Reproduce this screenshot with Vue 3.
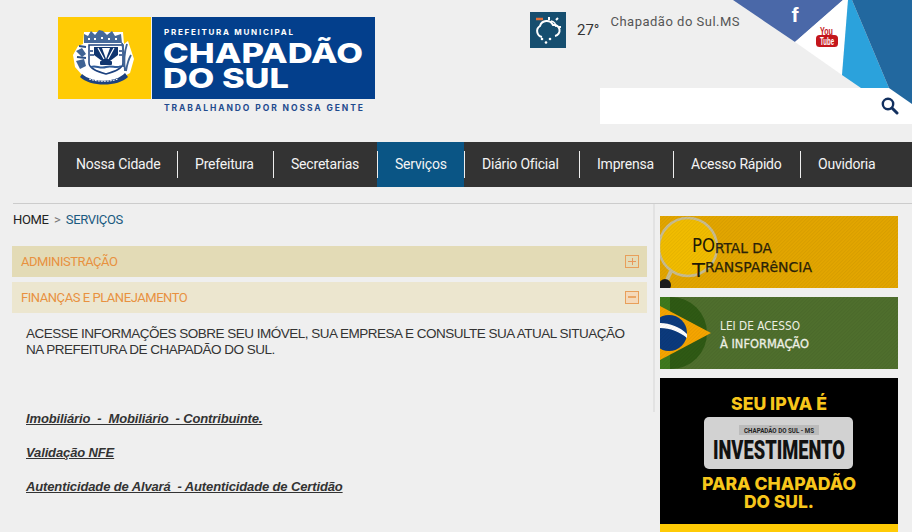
<template>
  <div class="page">
    <header class="header">
      <a class="logo">
        <svg width="317" height="100" viewBox="0 0 317 100">
          <rect width="93" height="82" fill="#ffcb05" />
          <rect x="94" width="223" height="82" fill="#033f8c" />
          <!-- brasao -->
          <path d="M25 27 L26 15 L65 15 L66 27 L70 24 L76 42 L72 56 L65 60 L58 65 L34 65 L24 58 L17 50 L15 38 L20 29 Z" fill="#fff" />
          <path d="M26 26 L26 17 L30 19 L33 14 L37 18 L41 13 L45 14 L49 18 L54 14 L57 19 L63 17 L64 26 Z" fill="#46699a" />
          <path d="M30 22 h2 M36 22 h2 M43 21 h2 M50 22 h2 M57 22 h2" stroke="#fff" stroke-width="2" />
          <path d="M31 28 H65 V46 C65 52 55 55 48 57 C41 55 31 52 31 46 Z" fill="#fff" stroke="#1d427f" stroke-width="1.500" />
          <path d="M36 30 H60 V38 L48 47 L36 38 Z" fill="#10356f" />
          <path d="M44 31 L48 42 L52 31 Z" fill="#fff" />
          <path d="M40 31 L46 42 M56 31 L50 42" stroke="#fff" stroke-width="1.200" />
          <path d="M32 34 h3 M32 38 h4 M61 34 h3 M61 38 h3" stroke="#1d427f" stroke-width="1.400" />
          <rect x="42" y="44" width="12" height="4" rx="1" fill="#10356f" />
          <path d="M33 50 C38 48 42 52 48 50 C54 48 58 52 63 49" fill="none" stroke="#2e5a97" stroke-width="2" />
          <path d="M18 34 l6 -3 l4 6 l-4 3 z M18 44 l8 -2 l2 7 l-6 3 z" fill="#3f6394" />
          <path d="M21 29 l7 1 M19 40 l9 1" stroke="#2a4f86" stroke-width="2" />
          <path d="M69 27 C66 36 66 46 67 54 M73 38 C70 43 69 48 68 54 M64 26 C66 34 66 42 65 50" fill="none" stroke="#3f6394" stroke-width="1.800" />
          <path d="M24 57 C34 66 58 66 67 56 L70 60 C60 70 32 70 22 60 Z" fill="#1d427f" />
          <path d="M31 62 C40 65 52 65 60 62" fill="none" stroke="#fff" stroke-width="1" stroke-dasharray="2 1" />
          <text x="106" y="17.500" class="logo-top" textLength="129" lengthAdjust="spacing">PREFEITURA MUNICIPAL</text>
          <text x="105" y="46" class="logo-big" textLength="200" lengthAdjust="spacingAndGlyphs">CHAPADÃO</text>
          <text x="105" y="70.500" class="logo-big" textLength="126" lengthAdjust="spacingAndGlyphs">DO SUL</text>
          <text x="106" y="94" class="logo-tag" textLength="199" lengthAdjust="spacing">TRABALHANDO POR NOSSA GENTE</text>
        </svg>
      </a>
      <div class="top-right">
        <div class="weather">
          <div class="weather-icon">
            <svg width="36" height="36" viewBox="0 0 36 36">
              <path d="M6 7 h7" stroke="#e2703a" stroke-width="2.500" />
              <path d="M19 5 v3 M26 8 l2 -2 M28 15 h3" stroke="#fff" stroke-width="2" fill="none" />
              <path d="M21 9 a6 6 0 0 1 5 6" stroke="#fff" stroke-width="1.500" fill="none" />
              <path d="M12 25 a6 6 0 0 1 -2 -11 a7 7 0 0 1 13 -1 a5.500 5.500 0 0 1 2 11" stroke="#fff" stroke-width="2" fill="none" />
              <circle cx="12" cy="27" r="1.300" fill="#fff" />
              <circle cx="20" cy="27" r="1.300" fill="#fff" />
              <circle cx="16" cy="30.500" r="1.300" fill="#fff" />
            </svg>
          </div>
          <span class="temp">27°</span>
          <span class="city">Chapadão do Sul.MS</span>
        </div>
        <div class="search">
          <svg width="18" height="18" viewBox="0 0 18 18">
            <circle cx="7" cy="7" r="5.200" fill="none" stroke="#12305f" stroke-width="2.400" />
            <path d="M11 11 L16 16" stroke="#12305f" stroke-width="3" stroke-linecap="round" />
          </svg>
        </div>
      </div>
      <svg class="social" width="180" height="105" viewBox="0 0 180 105">
        <polygon points="1,0 63,42 111,0" fill="#4a68a8" />
        <polygon points="111,0 63,42 110,75 116,0" fill="#fff" />
        <polygon points="116,0 110,75 129,88 157,88 120,0" fill="#2ba2dc" />
        <polygon points="120,0 157,88 180,104 180,0" fill="#22689f" />
        <text x="63" y="22" class="fb">f</text>
        <text x="94.500" y="35" class="yt-top" textLength="13" lengthAdjust="spacingAndGlyphs">You</text>
        <rect x="84" y="35" width="22" height="12" rx="3.500" fill="#c4161c" />
        <text x="95" y="45" class="yt-tube" textLength="14" lengthAdjust="spacingAndGlyphs">Tube</text>
      </svg>
    </header>

    <nav class="menu">
      <a v-for="item in menu" :key="item" class="menu-item" :class="{ active: item === 'Serviços' }">{{ item }}</a>
    </nav>

    <main class="main">
      <section class="content">
        <div class="breadcrumb">HOME <span class="gt">&gt;</span> <span class="current">SERVIÇOS</span></div>
        <div class="acc acc-closed">
          <span>ADMINISTRAÇÃO</span>
          <span class="acc-icon"><i class="h"></i><i class="v"></i></span>
        </div>
        <div class="acc acc-open">
          <span>FINANÇAS E PLANEJAMENTO</span>
          <span class="acc-icon filled"><i class="h thick"></i></span>
        </div>
        <div class="acc-body">
          <p class="intro">ACESSE INFORMAÇÕES SOBRE SEU IMÓVEL, SUA EMPRESA E CONSULTE SUA ATUAL SITUAÇÃO<br />NA PREFEITURA DE CHAPADÃO DO SUL.</p>
          <p v-for="link in links" :key="link" class="link"><a>{{ link }}</a></p>
        </div>
      </section>

      <aside class="side">
        <svg class="banner" width="238" height="72" viewBox="0 0 238 72">
          <defs>
            <pattern id="stripes" width="2.500" height="2.500" patternUnits="userSpaceOnUse" patternTransform="rotate(45)">
              <rect width="1" height="2.500" fill="#000" opacity="0.05" />
            </pattern>
          </defs>
          <rect width="238" height="72" fill="#e3a600" />
          <circle cx="28" cy="31" r="29" fill="#f2bd00" stroke="#c9bd91" stroke-width="2.500" />
          <path d="M11 55 L7 64" stroke="#c9bd91" stroke-width="4" />
          <circle cx="5" cy="69" r="6" fill="#1d1d1d" />
          <rect width="238" height="72" fill="url(#stripes)" />
          <text x="32" y="36" class="b-po" textLength="23" lengthAdjust="spacingAndGlyphs">PO</text>
          <text x="55" y="37" class="b-rest" textLength="57" lengthAdjust="spacingAndGlyphs">RTAL DA</text>
          <text x="32" y="61" class="b-po" textLength="13" lengthAdjust="spacingAndGlyphs">T</text>
          <text x="45" y="56" class="b-rest" textLength="107" lengthAdjust="spacingAndGlyphs">RANSPARêNCIA</text>
        </svg>
        <svg class="banner" width="238" height="72" viewBox="0 0 238 72">
          <rect width="238" height="72" fill="#4f6f2d" />
          <circle cx="11" cy="36" r="36" fill="#2f5a14" />
          <rect width="10" height="72" fill="#3e7a1d" />
          <polygon points="0,9 51,36 0,63" fill="#f6a500" />
          <circle cx="9" cy="36" r="18" fill="#0b3a7d" />
          <path d="M0 26 C10 26 20 30 27 37 L27 41 C20 35 10 31 0 31 Z" fill="#fff" />
          <rect width="238" height="72" fill="url(#stripes)" />
          <text x="60" y="33" class="b-lei" textLength="80" lengthAdjust="spacingAndGlyphs">LEI DE ACESSO</text>
          <text x="60" y="51" class="b-lei heavier" textLength="89" lengthAdjust="spacingAndGlyphs">À INFORMAÇÃO</text>
        </svg>
        <svg class="banner" width="238" height="154" viewBox="0 0 238 154">
          <rect width="238" height="154" fill="#000" />
          <rect y="146" width="238" height="8" fill="#ffcb05" />
          <text x="119" y="32" class="b-ipva" textLength="96" lengthAdjust="spacingAndGlyphs">SEU IPVA É</text>
          <rect x="44" y="39" width="149" height="52" rx="5" fill="#d2d2d2" />
          <rect x="79" y="47" width="80" height="10" fill="#bbb" />
          <text x="119" y="55" class="b-plate-top" textLength="70" lengthAdjust="spacingAndGlyphs">CHAPADÃO DO SUL - MS</text>
          <text x="119" y="81" class="b-plate" textLength="132" lengthAdjust="spacingAndGlyphs">INVESTIMENTO</text>
          <text x="119" y="112" class="b-ipva" textLength="154" lengthAdjust="spacingAndGlyphs">PARA CHAPADÃO</text>
          <text x="119" y="130" class="b-ipva" textLength="70" lengthAdjust="spacingAndGlyphs">DO SUL.</text>
        </svg>
      </aside>
    </main>
  </div>
</template>

<script setup>
const menu = ['Nossa Cidade', 'Prefeitura', 'Secretarias', 'Serviços', 'Diário Oficial', 'Imprensa', 'Acesso Rápido', 'Ouvidoria']

const links = [
  'Imobiliário  -  Mobiliário  - Contribuinte.',
  'Validação NFE',
  'Autenticidade de Alvará  - Autenticidade de Certidão'
]
</script>

<style>
html,
body {
  background: #efefef;
  overflow: hidden;
}
</style>

<style scoped>
.page {
  width: 912px;
  height: 532px;
  overflow: hidden;
  font-family: Roboto, Arial, sans-serif;
  color: #333;
}

.header {
  position: relative;
  display: flex;
  height: 142px;
  padding: 17px 0 0 58px;
  box-sizing: border-box;
}

.logo {
  display: block;
  width: 317px;
  height: 100px;
}

.logo svg {
  display: block;
}

.logo-top {
  font: 700 8px Inter, sans-serif;
  fill: #fff;
}

.logo-big {
  font: 800 27.500px Inter, sans-serif;
  fill: #fff;
}

.logo-tag {
  font: 700 8.500px Inter, sans-serif;
  fill: #1f4b8e;
}

.top-right {
  flex: 1;
  display: flex;
  flex-direction: column;
  margin: -5px 0 0 155px;
}

.weather {
  display: flex;
  height: 36px;
}

.weather-icon {
  width: 36px;
  height: 36px;
  background: #164e6f;
}

.temp {
  margin: 9px 0 0 11px;
  font-size: 15px;
  line-height: 18px;
}

.city {
  margin: 2px 0 0 11px;
  font-size: 13px;
  line-height: 16px;
  letter-spacing: 0.5px;
  color: #555;
}

.search {
  display: flex;
  align-items: center;
  justify-content: flex-end;
  align-self: flex-end;
  width: 312px;
  height: 36px;
  margin-top: 40px;
  padding-right: 13px;
  box-sizing: border-box;
  background: #fff;
}

.social {
  position: absolute;
  top: 0;
  right: 0;
}

.fb {
  font: 700 21px "Liberation Sans", sans-serif;
  fill: #fff;
  text-anchor: middle;
}

.yt-top {
  font: 700 10px "Liberation Sans", sans-serif;
  fill: #c4161c;
  text-anchor: middle;
}

.yt-tube {
  font: 700 10px "Liberation Sans", sans-serif;
  fill: #fff;
  text-anchor: middle;
}

.menu {
  display: grid;
  grid-template-columns: 119px 96px 104px 87px 115px 94px 127px 1fr;
  height: 45px;
  margin-left: 58px;
  background: #333;
}

.menu-item {
  position: relative;
  padding-left: 18px;
  font-size: 14px;
  line-height: 45px;
  letter-spacing: -0.2px;
  white-space: nowrap;
  color: #f4f4f4;
}

.menu-item + .menu-item::before {
  content: "";
  position: absolute;
  left: 0;
  top: 9px;
  height: 27px;
  border-left: 1px solid #eee;
}

.menu-item.active {
  background: #0a5585;
}

.main {
  display: flex;
  margin: 16px 0 0 13px;
  border-top: 1px solid #ccc;
}

.content {
  width: 635px;
  margin-left: -1px;
}

.breadcrumb {
  margin: 8px 0 0 1px;
  font-size: 13px;
  line-height: 16px;
  letter-spacing: -0.35px;
  word-spacing: 2.500px;
  color: #222;
}

.gt {
  color: #777;
}

.current {
  color: #1a5a80;
}

.acc {
  display: flex;
  align-items: center;
  justify-content: space-between;
  height: 31px;
  padding: 0 9px;
  box-sizing: border-box;
  font-size: 13px;
  letter-spacing: -0.45px;
  color: #e8913f;
}

.acc-closed {
  margin-top: 18px;
  background: #e3dbb6;
}

.acc-open {
  margin-top: 5px;
  background: #ece6cf;
}

.acc-icon {
  position: relative;
  width: 14px;
  height: 13px;
  margin-right: -1px;
  border: 1px solid #e89f5a;
  box-sizing: border-box;
}

.acc-icon.filled {
  background: #f4d9ba;
}

.acc-icon i {
  position: absolute;
  background: #e8975a;
}

.acc-icon .h {
  left: 2px;
  right: 2px;
  top: 5px;
  height: 1px;
}

.acc-icon .h.thick {
  top: 4px;
  height: 2px;
  background: #eba766;
}

.acc-icon .v {
  top: 2px;
  bottom: 2px;
  left: 6px;
  width: 1px;
}

.acc-body {
  padding: 13px 14px 0;
}

.intro {
  margin: 0 0 53px;
  font: 13.500px/16px "Liberation Sans", Arial, sans-serif;
  letter-spacing: -0.5px;
  white-space: nowrap;
  color: #333;
}

.link {
  margin: 0 0 18px;
  font: italic 700 13px/16px "Liberation Sans", Arial, sans-serif;
  letter-spacing: -0.13px;
  white-space: pre;
  color: #333;
}

.link a {
  text-decoration: underline;
}

.side {
  position: relative;
  width: 258px;
  margin-left: 7px;
  padding: 12px 0 0 6px;
  box-sizing: border-box;
  display: flex;
  flex-direction: column;
  gap: 9px;
}

.side::before {
  content: "";
  position: absolute;
  left: -1px;
  top: 0;
  width: 2px;
  height: 208px;
  background: #e2e2e2;
}

.banner {
  display: block;
  flex: none;
}

.b-po {
  font: 20px "DejaVu Sans", sans-serif;
  fill: #1e1a06;
}

.b-rest {
  font: 14px "DejaVu Sans", sans-serif;
  fill: #2a2208;
  stroke: #2a2208;
  stroke-width: 0.25px;
}

.b-lei {
  font: 12px "DejaVu Sans", sans-serif;
  fill: #eef0e4;
}

.b-lei.heavier {
  stroke: #eef0e4;
  stroke-width: 0.3px;
}

.b-ipva {
  font: 800 18px Inter, sans-serif;
  fill: #f7c61b;
  text-anchor: middle;
}

.b-plate-top {
  font: 700 7px Roboto, sans-serif;
  fill: #222;
  text-anchor: middle;
}

.b-plate {
  font: 900 26px Roboto, sans-serif;
  fill: #111;
  text-anchor: middle;
}
</style>
